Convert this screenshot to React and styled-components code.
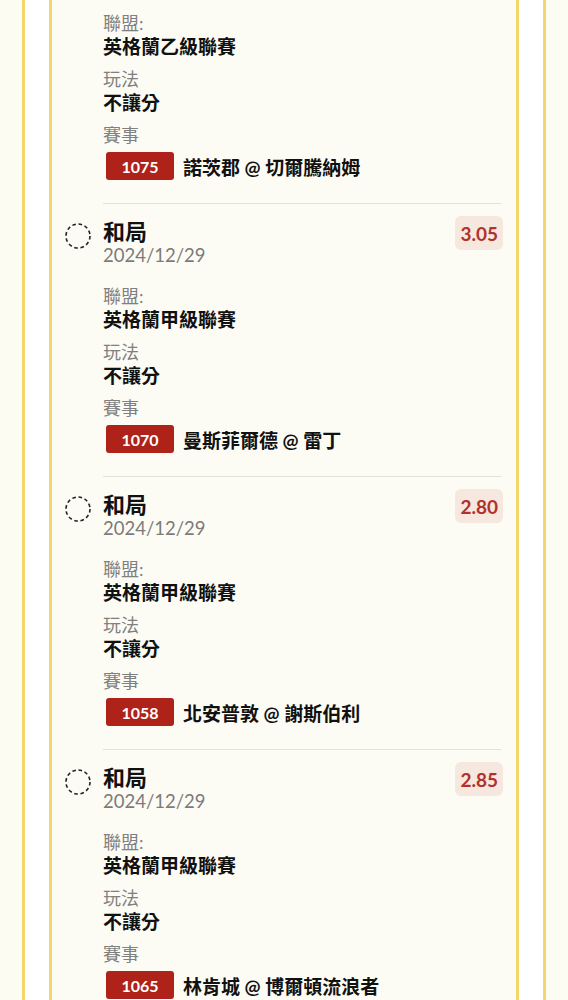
import React from "react"
import styled, { createGlobalStyle } from "styled-components"

const GlobalStyle = createGlobalStyle`
  html, body {
    margin: 0;
    padding: 0;
    background-color: #fdfcf2;
    font-family: "Lato", "Noto Sans CJK TC", sans-serif;
    color: #111;
  }
`

const Page = styled.div`
  height: 1000px;
  overflow: hidden;
  padding: 0 22px;
`

const Frame = styled.div`
  height: 100%;
  background-color: #ffffff;
  border-left: 3px solid #f4d66b;
  border-right: 3px solid #f4d66b;
  padding: 0 24px;
`

const Card = styled.div`
  height: 100%;
  overflow: hidden;
  background-color: #fdfcf4;
  border-left: 3px solid #f4d66b;
  border-right: 3px solid #f4d66b;
  padding: 0 15px 0 13px;
`

// list is scrolled: the first bet's header sits above the fold
const List = styled.div`
  margin-top: -70px;
`

const Row = styled.div`
  display: flex;
  gap: 12px;
`

const IconCol = styled.div`
  flex: 0 0 26px;
  padding-top: 20px;

  svg {
    display: block;
  }
`

const Body = styled.div`
  flex: 1;
  border-top: 1px solid #e3e2d8;
  padding: 12px 0 23px;
`

const Header = styled.div`
  display: flex;
  justify-content: space-between;
  align-items: flex-start;
`

const Title = styled.div`
  margin-top: 4px;
  font-size: 22px;
  line-height: 24px;
  font-weight: 700;
`

const DateText = styled.div`
  font-size: 18.5px;
  line-height: 22px;
  color: #7b7b7b;
`

const Odds = styled.div`
  height: 34px;
  padding: 0 5px;
  margin-right: -2px;
  display: flex;
  align-items: center;
  border-radius: 6px;
  background-color: #f6e7df;
  color: #b3312b;
  font-size: 19px;
  font-weight: 700;
`

const Label = styled.div`
  margin-top: ${(p) => p.$gap}px;
  font-size: 18px;
  line-height: 24px;
  color: #808080;
`

const Value = styled.div`
  font-size: 19px;
  line-height: 24px;
  font-weight: 700;
`

const Match = styled.div`
  margin-top: 5px;
  display: flex;
  align-items: center;
  gap: 9px;
`

const MatchNo = styled.span`
  width: 68px;
  height: 28px;
  margin-left: 3px;
  border-radius: 3px;
  background-color: #ae2219;
  color: #fff;
  font-size: 16px;
  font-weight: 700;
  display: flex;
  align-items: center;
  justify-content: center;
`

const Teams = styled.span`
  font-size: 19px;
  font-weight: 700;
`

const PendingIcon = () => (
  <svg width="26" height="26" viewBox="0 0 26 26">
    <circle
      cx="13"
      cy="13"
      r="12"
      fill="none"
      stroke="#222"
      strokeWidth="1.6"
      strokeDasharray="3.6 2.7"
    />
  </svg>
)

const bets = [
  { odds: "3.10", date: "2024/12/29", league: "英格蘭乙級聯賽", no: "1075", teams: "諾茨郡 @ 切爾騰納姆" },
  { odds: "3.05", date: "2024/12/29", league: "英格蘭甲級聯賽", no: "1070", teams: "曼斯菲爾德 @ 雷丁" },
  { odds: "2.80", date: "2024/12/29", league: "英格蘭甲級聯賽", no: "1058", teams: "北安普敦 @ 謝斯伯利" },
  { odds: "2.85", date: "2024/12/29", league: "英格蘭甲級聯賽", no: "1065", teams: "林肯城 @ 博爾頓流浪者" },
]

const BetItem = ({ bet }) => (
  <Row>
    <IconCol>
      <PendingIcon />
    </IconCol>
    <Body>
      <Header>
        <div>
          <Title>和局</Title>
          <DateText>{bet.date}</DateText>
        </div>
        <Odds>{bet.odds}</Odds>
      </Header>
      <Label $gap={18}>聯盟:</Label>
      <Value>{bet.league}</Value>
      <Label $gap={8}>玩法</Label>
      <Value>不讓分</Value>
      <Label $gap={8}>賽事</Label>
      <Match>
        <MatchNo>{bet.no}</MatchNo>
        <Teams>{bet.teams}</Teams>
      </Match>
    </Body>
  </Row>
)

const App = () => {
  return (
    <>
      <GlobalStyle />
      <Page>
        <Frame>
          <Card>
            <List>
              {bets.map((b) => (
                <BetItem key={b.no} bet={b} />
              ))}
            </List>
          </Card>
        </Frame>
      </Page>
    </>
  )
}

export default App
